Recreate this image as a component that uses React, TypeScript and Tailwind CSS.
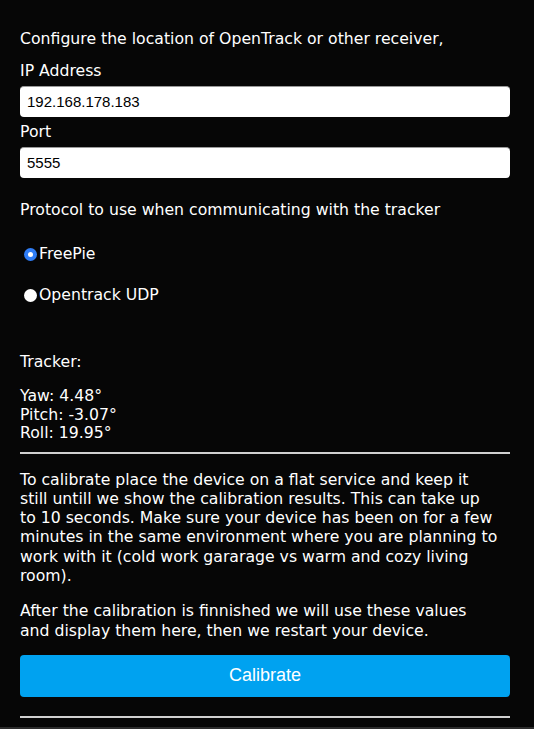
import React from "react";

const verdana = { fontFamily: '"DejaVu Sans", Verdana, sans-serif' };
const arial = { fontFamily: '"Liberation Sans", Arial, sans-serif' };

function Radio({ checked, label }: { checked: boolean; label: string }) {
  return (
    <div className="flex items-center h-[20px] pl-[4px]">
      {checked ? (
        <span className="w-[13px] h-[13px] rounded-full bg-[#2f7df6] flex items-center justify-center">
          <span className="w-[5px] h-[5px] rounded-full bg-white" />
        </span>
      ) : (
        <span className="w-[13px] h-[13px] rounded-full bg-white" />
      )}
      <span className="ml-[2px]">{label}</span>
    </div>
  );
}

export default function App() {
  return (
    <div className="w-[534px] h-[729px] bg-[#060606] text-white flex flex-col overflow-hidden" style={verdana}>
      <div className="pl-[20px] pr-[24px] flex flex-col text-[15.7px]">
        <div className="mt-[29px] leading-[20px]">Configure the location of OpenTrack or other receiver,</div>
        <div className="mt-[12px] leading-[20px]">IP Address</div>
        <div className="mt-[5px] h-[31px] bg-white rounded-[4px] border-t border-[#9a9a9a] flex items-center px-[7px] text-black text-[15px]" style={arial}>
          192.168.178.183
        </div>
        <div className="mt-[5px] leading-[20px]">Port</div>
        <div className="mt-[5px] h-[31px] bg-white rounded-[4px] border-t border-[#9a9a9a] flex items-center px-[7px] text-black text-[15px]" style={arial}>
          5555
        </div>
        <div className="mt-[22px] leading-[20px]">Protocol to use when communicating with the tracker</div>
        <div className="mt-[24px]"><Radio checked label="FreePie" /></div>
        <div className="mt-[21px]"><Radio checked={false} label="Opentrack UDP" /></div>
        <div className="mt-[47px] leading-[20px]">Tracker:</div>
        <div className="mt-[15px] leading-[18.5px]">
          <div>Yaw: 4.48°</div>
          <div>Pitch: -3.07°</div>
          <div>Roll: 19.95°</div>
        </div>
        <div className="mt-[9px] h-[2px] bg-[#d0d0d0]" />
        <div className="mt-[16px] leading-[19.3px]">
          To calibrate place the device on a flat service and keep it<br />
          still untill we show the calibration results. This can take up<br />
          to 10 seconds. Make sure your device has been on for a few<br />
          minutes in the same environment where you are planning to<br />
          work with it (cold work gararage vs warm and cozy living<br />
          room).
        </div>
        <div className="mt-[16px] leading-[19.3px]">
          After the calibration is finnished we will use these values<br />
          and display them here, then we restart your device.
        </div>
        <button className="mt-[15px] h-[42px] rounded-[4px] bg-[#00a2f0] text-white text-[18px] flex items-center justify-center" style={arial}>
          Calibrate
        </button>
        <div className="mt-[19px] h-[2px] bg-[#d0d0d0]" />
      </div>
      <div className="mt-auto h-[2px] bg-[#2c2c2c]" />
    </div>
  );
}
